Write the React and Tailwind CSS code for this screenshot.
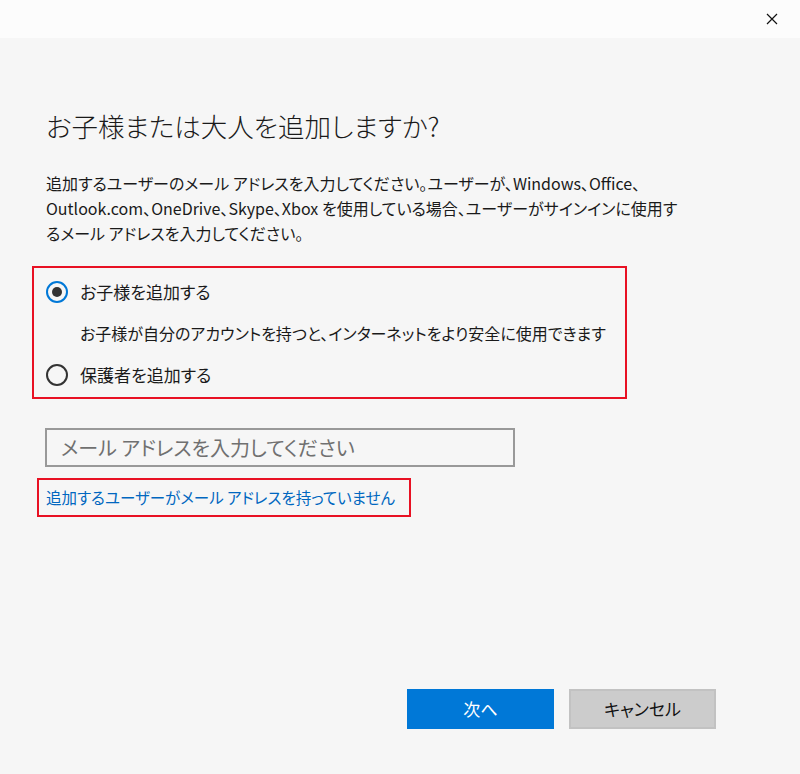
import React from 'react'

const font = "font-['Yu_Gothic_UI','Noto_Sans_CJK_JP',sans-serif] [font-feature-settings:'palt']"

const Radio = ({ checked }) => (
  <span
    className={
      checked
        ? 'flex h-[22px] w-[22px] shrink-0 items-center justify-center rounded-full border-2 border-[#0078d7]'
        : 'flex h-[22px] w-[22px] shrink-0 items-center justify-center rounded-full border-2 border-[#333333]'
    }
  >
    {checked && <span className="h-[10px] w-[10px] rounded-full bg-[#333333]"></span>}
  </span>
)

const App = () => {
  return (
    <div className={`flex h-[774px] w-[800px] flex-col bg-[#f6f6f6] text-[#1a1a1a] ${font}`}>
      {/* title bar */}
      <div className="flex h-[38px] shrink-0 items-center justify-end bg-[#fcfcfc] pr-[22px]">
        <svg width="12" height="12" viewBox="0 0 12 12">
          <path d="M1 1L11 11M11 1L1 11" stroke="#111" strokeWidth="1.2" />
        </svg>
      </div>

      <div className="flex flex-col pl-[46px]">
        <h1 className="mt-[71px] text-[26.5px] font-light leading-[34px] text-[#1a1a1a]">
          お子様または大人を追加しますか?
        </h1>

        <p className="mt-[28px] whitespace-nowrap text-[16px] leading-[25px]">
          追加するユーザーのメール アドレスを入力してください。ユーザーが、Windows、Office、
          <br />
          Outlook.com、OneDrive、Skype、Xbox を使用している場合、ユーザーがサインインに使用す
          <br />
          るメール アドレスを入力してください。
        </p>
      </div>

      {/* radio group */}
      <div className="ml-[32px] mt-[20px] flex w-[595px] flex-col border-2 border-[#e81123] pb-[10px] pl-[12px] pt-[12px]">
        <div className="flex h-[24px] items-center gap-[12px] text-[17px]">
          <Radio checked />
          <span>お子様を追加する</span>
        </div>
        <div className="mt-[17px] h-[24px] pl-[34px] text-[16px] leading-[24px]">
          お子様が自分のアカウントを持つと、インターネットをより安全に使用できます
        </div>
        <div className="mt-[18px] flex h-[24px] items-center gap-[12px] text-[17px]">
          <Radio />
          <span>保護者を追加する</span>
        </div>
      </div>

      {/* email input */}
      <div className="ml-[45px] mt-[29px] flex h-[39px] w-[470px] items-center border-2 border-[#999999] pl-[14px] text-[20px] text-[#707070]">
        メール アドレスを入力してください
      </div>

      <div className="ml-[37px] mt-[11px] flex h-[39px] w-[374px] items-center border-2 border-[#e81123] pl-[7px] text-[15.5px] text-[#0067c0]">
        追加するユーザーがメール アドレスを持っていません
      </div>

      {/* buttons */}
      <div className="mb-[45px] mr-[84px] mt-auto flex justify-end gap-[15px]">
        <button className="h-[40px] w-[147px] bg-[#0078d7] text-[17px] text-white">次へ</button>
        <button className="h-[40px] w-[147px] border-2 border-[#c2c2c2] bg-[#cccccc] text-[17px] text-[#111]">
          キャンセル
        </button>
      </div>
    </div>
  )
}

export default App
